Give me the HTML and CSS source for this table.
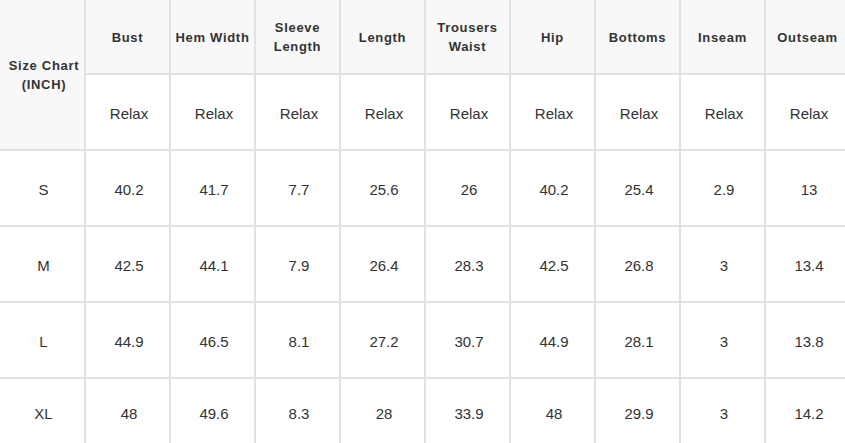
FILE: index.html
```html
<!DOCTYPE html>
<html>
<head>
<meta charset="utf-8">
<link rel="stylesheet" href="styles.css">
</head>
<body>
<table class="chart">
  <colgroup>
    <col class="c-first"><col class="c"><col class="c"><col class="c"><col class="c"><col class="c"><col class="c"><col class="c"><col class="c"><col class="c-last">
  </colgroup>
  <tr class="head">
    <th rowspan="2" class="size-head">Size Chart<br>(INCH)</th>
    <th>Bust</th><th>Hem Width</th><th>Sleeve<br>Length</th><th>Length</th><th>Trousers<br>Waist</th><th>Hip</th><th>Bottoms</th><th>Inseam</th><th>Outseam</th>
  </tr>
  <tr class="row">
    <td>Relax</td><td>Relax</td><td>Relax</td><td>Relax</td><td>Relax</td><td>Relax</td><td>Relax</td><td>Relax</td><td>Relax</td>
  </tr>
  <tr class="row">
    <td>S</td><td>40.2</td><td>41.7</td><td>7.7</td><td>25.6</td><td>26</td><td>40.2</td><td>25.4</td><td>2.9</td><td>13</td>
  </tr>
  <tr class="row">
    <td>M</td><td>42.5</td><td>44.1</td><td>7.9</td><td>26.4</td><td>28.3</td><td>42.5</td><td>26.8</td><td>3</td><td>13.4</td>
  </tr>
  <tr class="row">
    <td>L</td><td>44.9</td><td>46.5</td><td>8.1</td><td>27.2</td><td>30.7</td><td>44.9</td><td>28.1</td><td>3</td><td>13.8</td>
  </tr>
  <tr class="row last">
    <td>XL</td><td>48</td><td>49.6</td><td>8.3</td><td>28</td><td>33.9</td><td>48</td><td>29.9</td><td>3</td><td>14.2</td>
  </tr>
</table>
</body>
</html>
```
FILE: styles.css
```css
html, body {
  margin: 0;
  padding: 0;
  background: #ffffff;
  overflow: hidden;
}
body {
  width: 845px;
  height: 443px;
}
.chart {
  border-collapse: separate;
  border-spacing: 0;
  table-layout: fixed;
  width: 851px;
  font-family: "Liberation Sans", Arial, sans-serif;
  color: #333333;
}
.c-first { width: 86px; }
.c { width: 85px; }
.c-last { width: 85px; }
.chart th,
.chart td {
  box-sizing: border-box;
  padding: 0;
  border-right: 2px solid #e2e2e2;
  border-bottom: 2px solid #e2e2e2;
  text-align: center;
  vertical-align: middle;
}
.chart th {
  background: #f8f8f8;
  font-size: 13px;
  font-weight: bold;
  letter-spacing: 0.7px;
  line-height: 19px;
  height: 75px;
  padding-top: 1px;
}
.chart td {
  font-size: 15px;
  line-height: 19px;
  height: 76px;
  padding: 2px 0 0 3px;
}
.chart .size-head {
  height: 151px;
  padding: 0 0 0 4px;
}
.chart .last td {
  height: 68px;
}
```
